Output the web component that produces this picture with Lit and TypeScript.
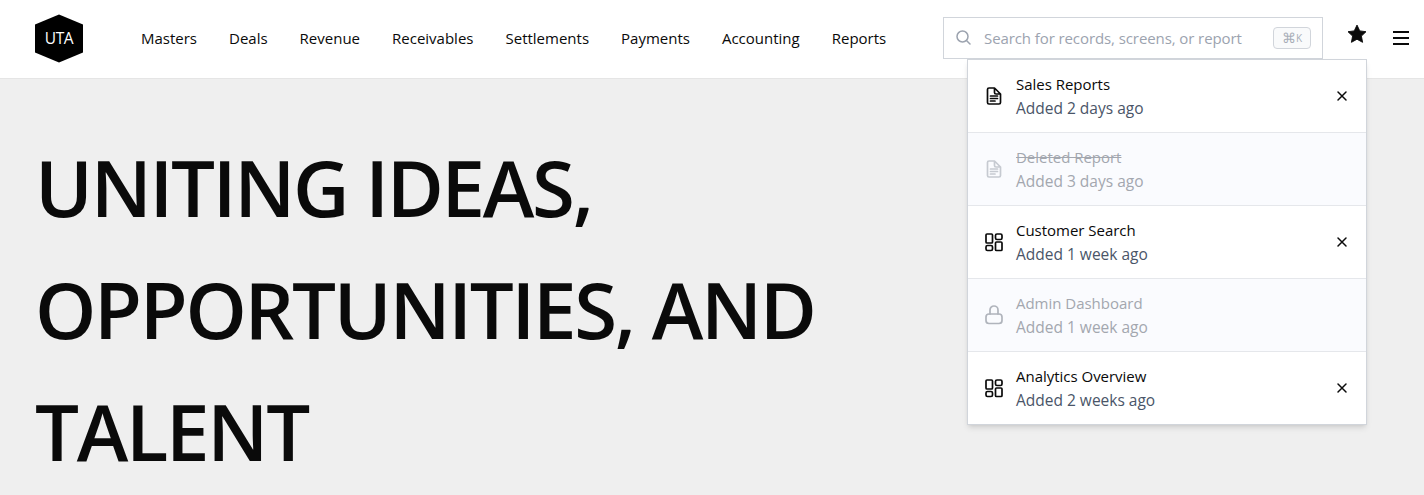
import { LitElement, html, css, svg } from "lit";
import { customElement } from "lit/decorators.js";

const docIcon = svg`<path d="M7 4H12.500L18.500 10V18.500A1.500 1.500 0 0 1 17 20H7A1.500 1.500 0 0 1 5.500 18.500V5.500A1.500 1.500 0 0 1 7 4Z M12.500 4V8.500A1.500 1.500 0 0 0 14 10H18.500 M8.500 12H15.500 M8.500 14.500H15.500 M8.500 17H13"/>`;
const gridIcon = svg`<rect x="4" y="4" width="6.500" height="9" rx="1"/><rect x="13.500" y="4" width="6.500" height="5.500" rx="1.500"/><rect x="4" y="15.500" width="6.500" height="5" rx="1.500"/><rect x="13.500" y="12" width="6.500" height="8.500" rx="1"/>`;
const lockIcon = svg`<rect x="4" y="11" width="16" height="9.500" rx="3"/><path d="M8 11V7A4 4 0 0 1 16 7V11"/>`;

interface Item { title: string; sub: string; icon: unknown; off?: boolean; struck?: boolean }

const items: Item[] = [
  { title: "Sales Reports", sub: "Added 2 days ago", icon: docIcon },
  { title: "Deleted Report", sub: "Added 3 days ago", icon: docIcon, off: true, struck: true },
  { title: "Customer Search", sub: "Added 1 week ago", icon: gridIcon },
  { title: "Admin Dashboard", sub: "Added 1 week ago", icon: lockIcon, off: true },
  { title: "Analytics Overview", sub: "Added 2 weeks ago", icon: gridIcon },
];
const nav = ["Masters", "Deals", "Revenue", "Receivables", "Settlements", "Payments", "Accounting", "Reports"];

@customElement("app-root")
export class AppRoot extends LitElement {
  static styles = css`
    :host {
      display: block;
      height: 495px;
      overflow: hidden;
      background: #efefef;
      font-family: "Open Sans", "Noto Sans", sans-serif;
      color: #0a0a0a;
    }
    .bar {
      position: relative;
      height: 78px;
      background: #fff;
      border-bottom: 1px solid #e5e5e5;
      display: flex;
      align-items: center;
      padding: 0 15px 0 34px;
    }
    .logo { width: 50px; height: 50px; display: block; flex: none; margin-top: -1px; }
    .logo text { font-size: 15.500px; letter-spacing: -0.4px; fill: #fff; }
    .nav { display: flex; gap: 32px; margin-left: 57px; margin-top: -2px; font-size: 15px; flex: 1; }
    .search {
      width: 380px;
      height: 42px;
      box-sizing: border-box;
      margin-top: -3px;
      border: 1px solid #d1d5db;
      display: flex;
      align-items: center;
      padding: 0 11px 0 12px;
      flex: none;
    }
    .search svg { width: 15px; height: 15px; fill: none; stroke: #9ca3af; stroke-width: 1.500; stroke-linecap: round; flex: none; }
    .ph { margin-left: 13px; font-size: 15px; letter-spacing: -0.09px; color: #9ca3af; flex: 1; white-space: nowrap; overflow: hidden; }
    .kbd {
      width: 38px;
      height: 22px;
      box-sizing: border-box;
      border: 1px solid #d1d5db;
      border-radius: 4px;
      background: #f9fafb;
      color: #a8aeb8;
      font-size: 14px;
      display: flex;
      align-items: center;
      justify-content: center;
    }
    .kbd b { font-weight: 400; font-size: 10px; }
    .star { width: 22px; height: 22px; margin-left: 23px; flex: none; margin-top: -10px; }
    .menu { width: 16px; height: 14px; margin-left: 25px; flex: none; display: flex; flex-direction: column; justify-content: space-between; margin-top: -2px; }
    .menu i { display: block; height: 2px; background: #0a0a0a; }
    .hero {
      margin: 0;
      padding: 47px 0 0 35px;
      font-size: 78px;
      font-weight: 600;
      line-height: 122px;
      letter-spacing: -2.300px;
      color: #0a0a0a;
      max-width: 830px;
    }
    .drop {
      position: absolute;
      top: 59px;
      left: 967px;
      width: 400px;
      box-sizing: border-box;
      background: #fff;
      border: 1px solid #d1d5db;
      box-shadow: 0 4px 6px -1px rgba(0,0,0,.1), 0 2px 4px -2px rgba(0,0,0,.1);
      z-index: 2;
    }
    .row {
      height: 73px;
      box-sizing: border-box;
      display: flex;
      align-items: center;
      padding: 0 16px;
      border-bottom: 1px solid #e5e7eb;
    }
    .row:last-child { border-bottom: 0; height: 72px; }
    .row.off { background: #fafbfe; }
    .ico { width: 24px; height: 24px; margin: 0 -2px; fill: none; stroke: #0a0a0a; stroke-width: 1.700; stroke-linecap: round; stroke-linejoin: round; flex: none; }
    .off .ico { stroke: #c6cad1; }
    .off .ico.lock { stroke: #b0b4bc; }
    .txt { margin-left: 12px; flex: 1; }
    .t { font-size: 15px; line-height: 24px; letter-spacing: -0.02px; color: #0a0a0a; }
    .s { font-size: 15.500px; line-height: 24px; color: #4a5568; }
    .off .t, .off .s { color: #a3a7af; }
    .struck { text-decoration: line-through; }
    .x { width: 12px; height: 12px; stroke: #0a0a0a; stroke-width: 1.500; stroke-linecap: round; fill: none; flex: none; margin-right: 2px; }
  `;

  render() {
    return html`
      <div class="bar">
        <svg class="logo" viewBox="0 0 50 50">
          <polygon points="25,0.500 49,10.500 49,38.500 25,48.500 1,38.500 1,10.500" fill="#000" />
          <text x="25" y="30" text-anchor="middle">UTA</text>
        </svg>
        <div class="nav">${nav.map((n) => html`<span>${n}</span>`)}</div>
        <div class="search">
          <svg viewBox="0 0 15 15"><circle cx="6.500" cy="6.500" r="5.500" /><path d="M10.500 10.500L14 14" /></svg>
          <span class="ph">Search for records, screens, or report</span>
          <span class="kbd">⌘<b>K</b></span>
        </div>
        <svg class="star" viewBox="0 0 24 24"><path fill="#0a0a0a" stroke="#0a0a0a" stroke-width="1" stroke-linejoin="round" d="M12 2.300l3 6.300 6.800.9-5 4.800 1.300 6.800L12 17.700l-6.100 3.400 1.300-6.800-5-4.800 6.800-.9z" /></svg>
        <div class="menu"><i></i><i></i><i></i></div>
      </div>
      <h1 class="hero">UNITING IDEAS, OPPORTUNITIES, AND TALENT</h1>
      <div class="drop">
        ${items.map(
          (it) => html`
            <div class="row ${it.off ? "off" : ""}">
              <svg class="ico ${it.icon === lockIcon ? "lock" : ""}" viewBox="0 0 24 24">${it.icon}</svg>
              <div class="txt">
                <div class="t ${it.struck ? "struck" : ""}">${it.title}</div>
                <div class="s">${it.sub}</div>
              </div>
              ${it.off ? "" : html`<svg class="x" viewBox="0 0 12 12"><path d="M2 2L10 10M10 2L2 10" /></svg>`}
            </div>
          `
        )}
      </div>
    `;
  }
}
